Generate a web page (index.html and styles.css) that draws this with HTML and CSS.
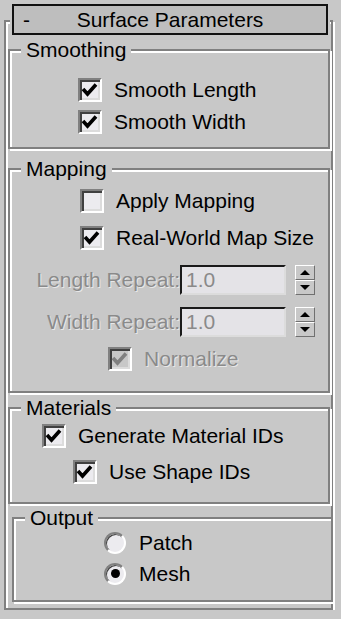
FILE: index.html
```html
<!DOCTYPE html>
<html lang="en">
<head>
    <meta charset="UTF-8">
    <meta name="viewport" content="width=device-width, initial-scale=1.0">
    <title>Surface Parameters</title>
    <link rel="stylesheet" href="styles.css">
</head>
<body>
    <div class="rollout">
        <div class="rollout-title">
            <span class="toggle">-</span>
            <span class="caption">Surface Parameters</span>
            <span></span>
        </div>

        <div class="group smoothing">
            <div class="group-title">Smoothing</div>
            <label class="check smooth-row"><span class="box"><svg viewBox="0 0 20 20"><polyline points="3,9 7.5,14 16,4.5"/></svg></span>Smooth Length</label>
            <label class="check smooth-row"><span class="box"><svg viewBox="0 0 20 20"><polyline points="3,9 7.5,14 16,4.5"/></svg></span>Smooth Width</label>
        </div>

        <div class="group mapping">
            <div class="group-title">Mapping</div>
            <label class="check map-row first"><span class="box"></span>Apply Mapping</label>
            <label class="check map-row second"><span class="box"><svg viewBox="0 0 20 20"><polyline points="3,9 7.5,14 16,4.5"/></svg></span>Real-World Map Size</label>
            <div class="spin-row">
                <span class="spin-label">Length Repeat:</span>
                <span class="field">1.0</span>
                <span class="spinner">
                    <span class="spin-btn"><svg viewBox="0 0 10 5"><polygon points="5,0 10,5 0,5"/></svg></span>
                    <span class="spin-btn"><svg viewBox="0 0 10 5"><polygon points="0,0 10,0 5,5"/></svg></span>
                </span>
            </div>
            <div class="spin-row">
                <span class="spin-label">Width Repeat:</span>
                <span class="field">1.0</span>
                <span class="spinner">
                    <span class="spin-btn"><svg viewBox="0 0 10 5"><polygon points="5,0 10,5 0,5"/></svg></span>
                    <span class="spin-btn"><svg viewBox="0 0 10 5"><polygon points="0,0 10,0 5,5"/></svg></span>
                </span>
            </div>
            <label class="check disabled normalize"><span class="box"><svg viewBox="0 0 20 20"><polyline points="3,9 7.5,14 16,4.5"/></svg></span>Normalize</label>
        </div>

        <div class="group materials">
            <div class="group-title">Materials</div>
            <label class="check gen-ids"><span class="box"><svg viewBox="0 0 20 20"><polyline points="3,9 7.5,14 16,4.5"/></svg></span>Generate Material IDs</label>
            <label class="check shape-ids"><span class="box"><svg viewBox="0 0 20 20"><polyline points="3,9 7.5,14 16,4.5"/></svg></span>Use Shape IDs</label>
        </div>

        <div class="group output">
            <div class="group-title">Output</div>
            <label class="check radio-row"><span class="radio"></span>Patch</label>
            <label class="check radio-row"><span class="radio on"></span>Mesh</label>
        </div>
    </div>
</body>
</html>
```

FILE: styles.css
```css
body {
    margin: 0;
    background-color: #c8c8c8;
    font-family: "Liberation Sans", Arial, sans-serif;
    font-size: 21px;
    color: #000000;
}
.rollout {
    box-sizing: border-box;
    width: 329px;
    height: 590px;
    margin: 20px 0 0 4px;
    border: 2px solid #808080;
    box-shadow: inset 2px 2px 0 #ffffff, 2px 2px 0 #ffffff;
}
.rollout-title {
    box-sizing: border-box;
    display: grid;
    grid-template-columns: 1fr auto 1fr;
    align-items: center;
    width: 316px;
    height: 31px;
    margin: -18px 0 0 6px;
    border: 2px solid #111111;
    background-color: #bebebe;
    box-shadow: 0 0 0 2px #c8c8c8;
}
.toggle {
    padding-left: 9px;
}
.group {
    box-sizing: border-box;
    width: 322px;
    margin-left: 2px;
    border: 2px solid #808080;
    box-shadow: inset 2px 2px 0 #ffffff, 2px 2px 0 #ffffff;
}
.group-title {
    width: max-content;
    height: 24px;
    line-height: 24px;
    margin: -13px 0 0 11px;
    padding: 0 5px;
    background-color: #c8c8c8;
}
.smoothing {
    margin-top: 14px;
    padding-bottom: 9px;
}
.smoothing .group-title {
    margin-bottom: 12px;
}
.mapping {
    margin-top: 19px;
    padding-bottom: 16px;
}
.materials {
    margin-top: 14px;
    padding-bottom: 14px;
}
.output {
    width: 321px;
    margin: 13px 0 0 6px;
    padding-bottom: 11px;
}
.output .group-title {
    margin-bottom: -3px;
}
.check {
    display: flex;
    align-items: center;
    gap: 12px;
    height: 32px;
}
.check.disabled {
    color: #8a8a8a;
    text-shadow: 1px 1px 0 rgba(255, 255, 255, 0.6);
}
.box {
    box-sizing: border-box;
    width: 24px;
    height: 24px;
    flex: none;
    border: 2px solid;
    border-color: #808080 #ffffff #ffffff #808080;
    box-shadow: inset 2px 2px 0 #404040, inset -2px -2px 0 #dcdcdc;
    background-color: #ecebef;
}
.box svg {
    display: block;
    width: 20px;
    height: 20px;
}
.box polyline {
    fill: none;
    stroke: #000000;
    stroke-width: 3.6;
}
.disabled .box {
    background-color: #c8c8c8;
}
.disabled .box polyline {
    stroke: #808080;
}
.smooth-row {
    padding-left: 68px;
}
.map-row {
    padding-left: 70px;
}
.map-row.first {
    margin-top: 4px;
}
.map-row.second {
    margin-top: 5px;
}
.normalize {
    padding-left: 98px;
    margin-top: 5px;
}
.gen-ids {
    padding-left: 32px;
}
.shape-ids {
    padding-left: 63px;
    margin-top: 4px;
}
.radio-row {
    height: 31px;
    padding-left: 90px;
    gap: 13px;
}
.radio {
    box-sizing: border-box;
    width: 22px;
    height: 22px;
    flex: none;
    border-radius: 50%;
    border: 2px solid;
    border-color: #808080 #ffffff #ffffff #808080;
    box-shadow: inset 1px 1px 0 #404040;
    background-color: #ecebef;
    display: flex;
    align-items: center;
    justify-content: center;
}
.radio.on::after {
    content: "";
    width: 9px;
    height: 9px;
    border-radius: 50%;
    background-color: #000000;
}
.spin-row {
    display: flex;
    align-items: center;
    height: 32px;
    margin-top: 10px;
}
.spin-label {
    width: 170px;
    text-align: right;
    color: #8a8a8a;
    text-shadow: 1px 1px 0 rgba(255, 255, 255, 0.6);
}
.field {
    box-sizing: border-box;
    width: 106px;
    height: 30px;
    padding-left: 4px;
    line-height: 26px;
    border: 2px solid;
    border-color: #1a1a1a #dcdcdc #dcdcdc #1a1a1a;
    background-color: #e4e3e7;
    color: #8a8a8a;
}
.spinner {
    display: flex;
    flex-direction: column;
    width: 20px;
    height: 30px;
    margin-left: 9px;
}
.spin-btn {
    box-sizing: border-box;
    flex: 1;
    display: flex;
    align-items: center;
    justify-content: center;
    border: 1px solid;
    border-color: #ffffff #707070 #707070 #ffffff;
}
.spin-btn svg {
    width: 10px;
    height: 5px;
}
```
